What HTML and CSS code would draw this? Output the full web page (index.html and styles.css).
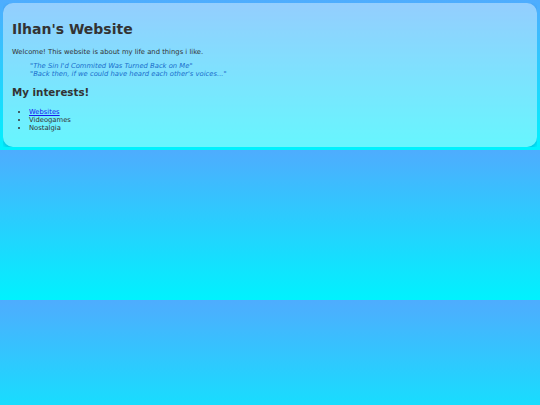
FILE: index.html
```html
<!DOCTYPE html>
<html>
<head>
<meta charset="utf-8">
<title>Ilhan's Website</title>
<link rel="stylesheet" href="styles.css">
</head>
<body>
<div class="card">
  <h1 class="title">Ilhan's Website</h1>
  <p class="intro">Welcome! This website is about my life and things i like.</p>
  <blockquote class="quotes">
    <div>"The Sin I'd Commited Was Turned Back on Me"</div>
    <div>"Back then, if we could have heard each other's voices..."</div>
  </blockquote>
  <h2 class="subtitle">My interests!</h2>
  <ul class="interests">
    <li><a href="#" class="link">Websites</a></li>
    <li>Videogames</li>
    <li>Nostalgia</li>
  </ul>
</div>
</body>
</html>
```
FILE: styles.css
```css
body {
  margin: 3px;
  font-family: "DejaVu Sans", Verdana, sans-serif;
  font-size: 6.8px;
  line-height: 8px;
  color: #333;
  background: linear-gradient(#4facfe, #00f2fe);
}
.card {
  background: rgba(255, 255, 255, 0.4);
  border-radius: 10px;
  padding: 9px;
  box-shadow: 0 2px 4px rgba(0, 40, 120, 0.25);
}
.title {
  font-size: 14px;
  line-height: 16px;
  font-weight: bold;
  margin: 9px 0 11px;
}
.intro {
  margin: 7px 0 6px;
}
.quotes {
  margin: 6px 18px 7px;
  font-style: italic;
  color: #1a6fcc;
}
.subtitle {
  font-size: 10.3px;
  line-height: 12px;
  font-weight: bold;
  margin: 8px 0 10px;
}
.interests {
  margin: 7px 0 6px;
  padding-left: 17px;
}
.link {
  color: #1a1aee;
}
```
